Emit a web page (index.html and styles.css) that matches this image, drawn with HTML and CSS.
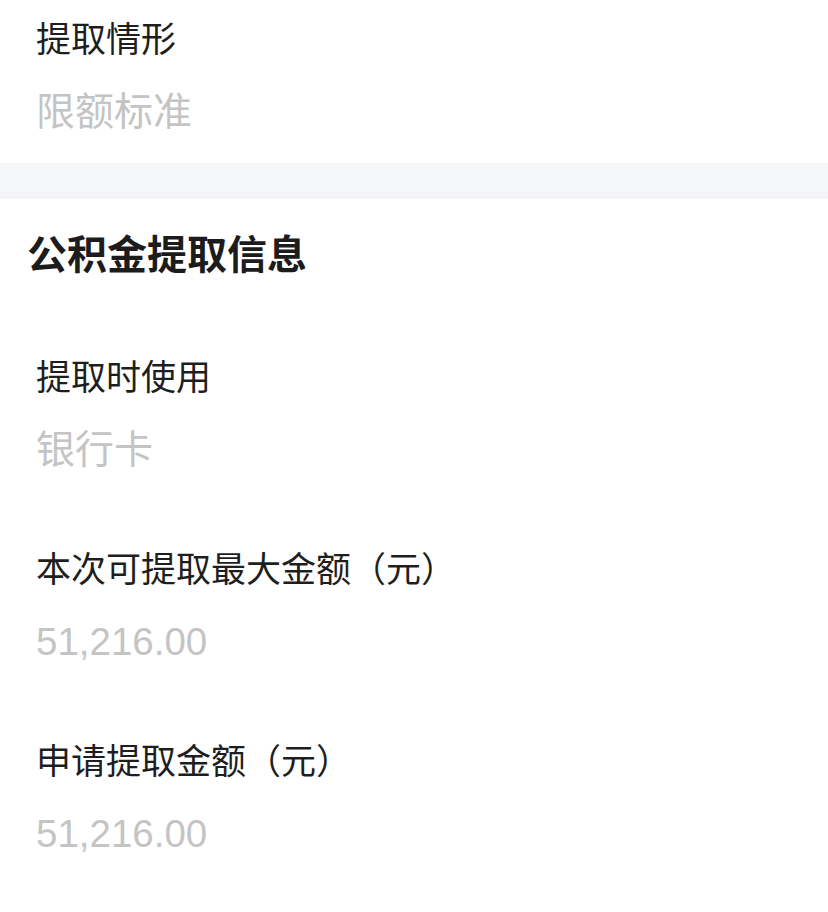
FILE: index.html
```html
<!DOCTYPE html>
<html lang="zh-CN">
<head>
  <meta charset="UTF-8">
  <title>公积金提取信息</title>
  <link rel="stylesheet" href="styles.css">
</head>
<body>

  <!-- 提取情形 -->
  <div class="section first">
    <div class="field">
      <div class="label">提取情形</div>
      <div class="value">限额标准</div>
    </div>
  </div>

  <div class="band"></div>

  <!-- 公积金提取信息 -->
  <div class="section">
    <h2 class="title">公积金提取信息</h2>
    <div class="field">
      <div class="label">提取时使用</div>
      <div class="value">银行卡</div>
    </div>
    <div class="field">
      <div class="label">本次可提取最大金额（元）</div>
      <div class="value num">51,216.00</div>
    </div>
    <div class="field">
      <div class="label">申请提取金额（元）</div>
      <div class="value num">51,216.00</div>
    </div>
  </div>

</body>
</html>
```

FILE: styles.css
```css
body {
  margin: 0;
  background-color: #fff;
  font-family: "Liberation Sans", "Noto Sans CJK SC", sans-serif;
}
.section {
  padding: 0 0 0 36px;
}
.section.first {
  padding-top: 16px;
  padding-bottom: 27px;
}
.band {
  height: 34px;
  background-color: #f5f6f8;
  border-bottom: 1px solid #eceef1;
}
.title {
  margin: 29px 0 0 -9px;
  font-size: 40px;
  line-height: 56px;
  font-weight: 600;
  color: #1c1c1c;
}
.field + .field {
  margin-top: 72px;
}
.title + .field {
  margin-top: 71px;
}
.label {
  font-size: 35px;
  line-height: 48px;
  color: #1e1e1e;
}
.value {
  margin-top: 24px;
  font-size: 39px;
  line-height: 48px;
  color: #c4c4c4;
}
.value.num {
  font-size: 38.5px;
}
```
